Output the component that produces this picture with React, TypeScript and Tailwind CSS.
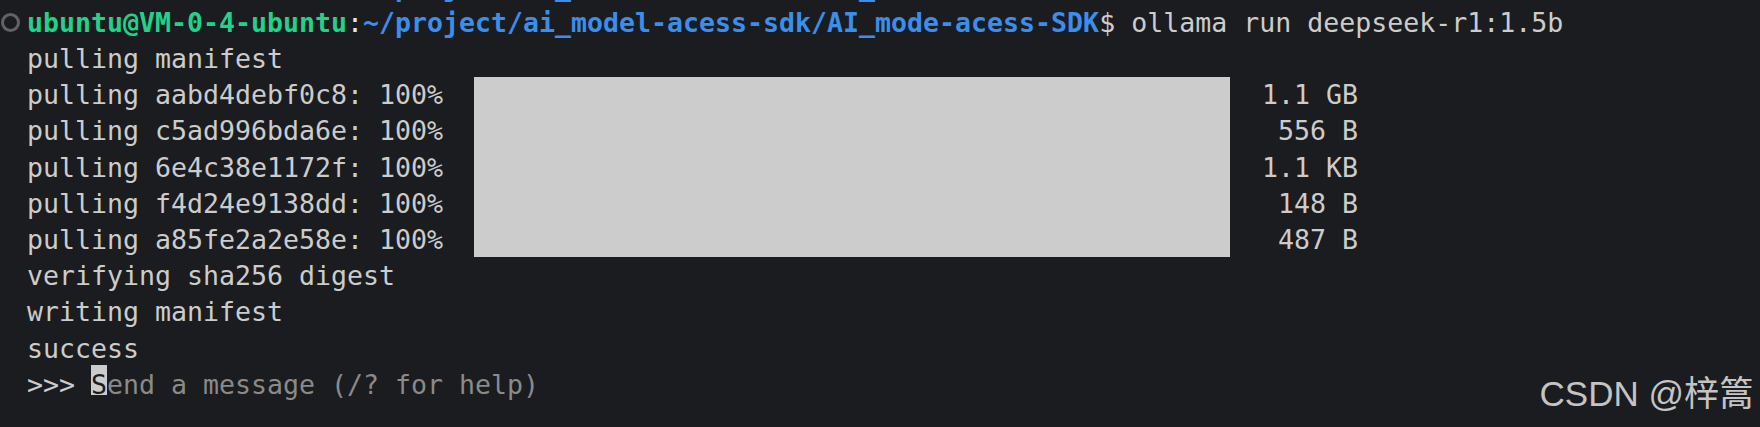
import React from "react";

const pulls = [
  { id: "aabd4debf0c8", size: "1.1 GB" },
  { id: "c5ad996bda6e", size: "556 B" },
  { id: "6e4c38e1172f", size: "1.1 KB" },
  { id: "f4d24e9138dd", size: "148 B" },
  { id: "a85fe2a2e58e", size: "487 B" },
];

function Prompt() {
  return (
    <>
      <span className="font-bold text-[#23d18b]">ubuntu@VM-0-4-ubuntu</span>
      <span className="text-[#e5e5e5]">:</span>
      <span className="font-bold text-[#3b8eea]">
        ~/project/ai_model-acess-sdk/AI_mode-acess-SDK
      </span>
      <span className="text-[#cccccc]">$</span>
    </>
  );
}

function Line({ children, mark }: { children?: React.ReactNode; mark?: boolean }) {
  return (
    <div className="flex h-[36.2px] whitespace-pre">
      <div className="flex w-[27px] shrink-0 items-center pl-[1px]">
        {mark && (
          <span className="mt-[-1px] block h-[19px] w-[19px] shrink-0 rounded-full border-[3px] border-solid border-[#606266]" />
        )}
      </div>
      <div>{children}</div>
    </div>
  );
}

function App() {
  return (
    <div className="relative h-[427px] w-[1760px] overflow-hidden bg-[#1b1c1f] text-[#cccccc] font-['DejaVu_Sans_Mono',monospace] text-[26.58px] leading-[36.2px]">
      <div className="-mt-[31.3px]">
        <Line>
          <Prompt />
        </Line>
        <Line mark>
          <Prompt />
          <span> ollama run deepseek-r1:1.5b</span>
        </Line>
        <Line>pulling manifest</Line>

        <div className="flex">
          <div className="w-[27px] shrink-0" />
          <div className="grid grid-cols-[447px_756px_128px]">
            {pulls.map((p, i) => (
              <React.Fragment key={p.id}>
                <div className="h-[36.2px] whitespace-pre" style={{ gridRow: i + 1, gridColumn: 1 }}>
                  pulling {p.id}: 100%
                </div>
                <div
                  className="h-[36.2px] whitespace-pre text-right"
                  style={{ gridRow: i + 1, gridColumn: 3 }}
                >
                  {p.size}
                </div>
              </React.Fragment>
            ))}
            <div className="col-start-2 row-start-1 row-span-5 self-start -mt-[0.5px] h-[180px] bg-[#cccccc]" />
          </div>
        </div>

        <Line>verifying sha256 digest</Line>
        <Line>writing manifest</Line>
        <Line>success</Line>
        <Line>
          <span>{">>> "}</span>
          <span className="relative">
            <span className="absolute left-0 top-[-4px] h-[30px] w-[16px] bg-[#cccccc]" />
            <span className="relative text-[#1b1c1f]">S</span>
          </span>
          <span className="text-[#8a8a8a]">end a message (/? for help)</span>
        </Line>
      </div>

      <div className="absolute right-[6px] top-[374px] font-['Liberation_Sans','Noto_Sans_CJK_SC',sans-serif] text-[35px] leading-[40px] text-[#c4c4c4]">
        CSDN @梓篙
      </div>
    </div>
  );
}

export default App;
